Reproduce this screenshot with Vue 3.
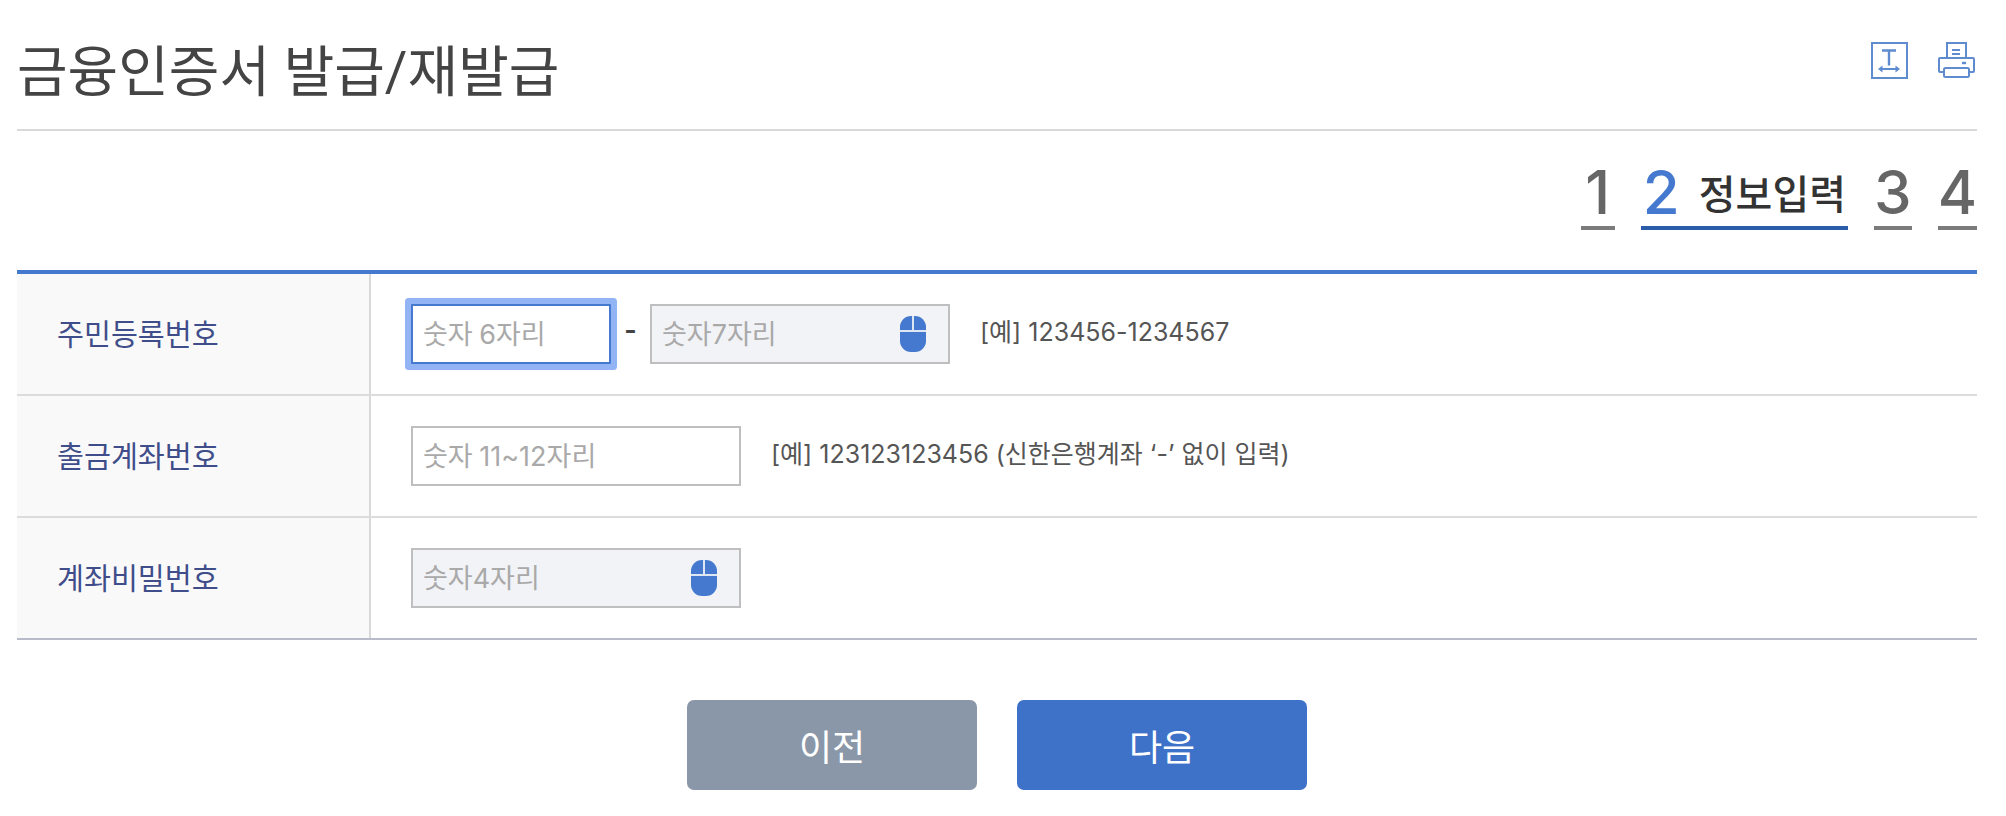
<script setup>
const steps = [
  { num: "1" },
  { num: "2", label: "정보입력", active: true },
  { num: "3" },
  { num: "4" }
];
</script>

<template>
  <div class="page">
    <header class="head">
      <h1>금융인증서 발급/재발급</h1>
      <div class="tools">
        <svg width="37" height="37" viewBox="0 0 37 37" fill="none" stroke="#5f8bcf" stroke-width="2">
          <rect x="1" y="1" width="35" height="35" />
          <path d="M11 8.5h14M18 8.5v15" stroke-width="2.4" />
          <path d="M9 27h18" />
          <path d="M7 27l4.500-3.500v7zM29 27l-4.500-3.500v7z" fill="#5f8bcf" stroke="none" />
        </svg>
        <svg width="37" height="37" viewBox="0 0 37 37" fill="none" stroke="#5f8bcf" stroke-width="2">
          <path d="M9 16V1h19v15" />
          <path d="M14 8h8M14 12h8" />
          <path d="M6 30H2a1 1 0 0 1-1-1V17a1 1 0 0 1 1-1h33a1 1 0 0 1 1 1v12a1 1 0 0 1-1 1h-4" />
          <rect x="6" y="26" width="25" height="9" rx="1.500" />
          <path d="M24 21h4" stroke-width="2.400" />
        </svg>
      </div>
    </header>

    <ol class="steps">
      <li v-for="step in steps" :key="step.num" class="step" :class="{ active: step.active }">
        <span class="num">{{ step.num }}</span>
        <strong v-if="step.label">{{ step.label }}</strong>
      </li>
    </ol>

    <section class="form">
      <div class="row">
        <div class="label">주민등록번호</div>
        <div class="cell">
          <input class="field focus" type="text" placeholder="숫자 6자리" />
          <span class="dash">-</span>
          <div class="secure wide">
            <input class="field" type="text" placeholder="숫자7자리" />
            <svg class="mouse" width="26" height="36" viewBox="0 0 26 36">
              <rect width="26" height="36" rx="11" fill="#4479cf" />
              <path d="M0 15h26M13 0v15" stroke="#dfe6f3" stroke-width="2" />
            </svg>
          </div>
          <span class="hint">[예] 123456-1234567</span>
        </div>
      </div>
      <div class="row">
        <div class="label">출금계좌번호</div>
        <div class="cell">
          <input class="field plain" type="text" placeholder="숫자 11~12자리" />
          <span class="hint">[예] 123123123456 (신한은행계좌 ‘-’ 없이 입력)</span>
        </div>
      </div>
      <div class="row">
        <div class="label">계좌비밀번호</div>
        <div class="cell">
          <div class="secure">
            <input class="field" type="text" placeholder="숫자4자리" />
            <svg class="mouse" width="26" height="36" viewBox="0 0 26 36">
              <rect width="26" height="36" rx="11" fill="#4479cf" />
              <path d="M0 15h26M13 0v15" stroke="#dfe6f3" stroke-width="2" />
            </svg>
          </div>
        </div>
      </div>
    </section>

    <div class="actions">
      <button type="button" class="btn prev">이전</button>
      <button type="button" class="btn next">다음</button>
    </div>
  </div>
</template>

<style>
html,
body {
  background: #fff;
}
</style>

<style scoped>
.page {
  width: 1960px;
  padding-left: 17px;
  font-family: Roboto, "Noto Sans CJK KR", sans-serif;
  color: #555;
}

.head {
  display: flex;
  align-items: flex-start;
  justify-content: space-between;
  height: 129px;
  border-bottom: 2px solid #d9d9d9;
}

.head h1 {
  margin: 36px 0 0;
  font-size: 55px;
  line-height: 72px;
  font-weight: 400;
  color: #444;
}

.tools {
  display: flex;
  gap: 30px;
  padding: 42px 2px 0 0;
}

.steps {
  display: flex;
  justify-content: flex-end;
  gap: 26px;
  height: 139px;
  margin: 0;
  padding: 0;
  list-style: none;
}

.step {
  display: flex;
  align-items: center;
  justify-content: center;
  gap: 19px;
  min-width: 34px;
  height: 68px;
  margin-top: 27px;
  border-bottom: 4px solid #7b7b7b;
}

.step .num {
  font-family: Inter, sans-serif;
  font-size: 60px;
  line-height: 68px;
  font-weight: 500;
  color: #666;
}

.step strong {
  font-size: 40px;
  font-weight: 500;
  color: #333;
  padding-right: 2px;
}

.step.active {
  border-color: #2a5caa;
  padding-left: 2px;
}

.step.active .num {
  color: #4479cf;
}

.form {
  border-top: 4px solid #4479cf;
  border-bottom: 2px solid #b9bbcb;
}

.row {
  display: flex;
  height: 120px;
}

.row + .row {
  border-top: 2px solid #dcdcdc;
}

.label {
  display: flex;
  align-items: center;
  width: 312px;
  padding: 0 0 4px 40px;
  background: #f9f9f9;
  border-right: 2px solid #d9d9d9;
  font-size: 29.3px;
  color: #3f4e8a;
}

.cell {
  display: flex;
  flex: 1;
  align-items: center;
  padding-left: 40px;
}

.field {
  box-sizing: border-box;
  height: 60px;
  padding: 0 10px;
  border: 2px solid #bfbfbf;
  border-radius: 0;
  background: transparent;
  font: inherit;
  font-family: Inter, "Noto Sans CJK KR", sans-serif;
  font-size: 27px;
  word-spacing: -1px;
  color: #333;
  outline: none;
}

.field::placeholder {
  color: #a9a9a9;
  opacity: 1;
}

.field.plain {
  width: 330px;
}

.field.focus {
  width: 200px;
  border-color: #4479cf;
  background: #fff;
  box-shadow: 0 0 0 6px #92b4f5;
  border-radius: 1px;
}

.secure {
  position: relative;
  width: 330px;
  height: 60px;
  background: #f2f3f7;
}

.secure.wide {
  width: 300px;
}

.secure .field {
  width: 100%;
}

.mouse {
  position: absolute;
  top: 12px;
  right: 24px;
}

.dash {
  width: 39px;
  padding-bottom: 8px;
  text-align: center;
  font-size: 34px;
  font-weight: 500;
  color: #444;
}

.hint {
  margin-left: 30px;
  padding-bottom: 8px;
  font-family: Inter, "Noto Sans CJK KR", sans-serif;
  font-size: 25px;
  color: #555;
}

.actions {
  display: flex;
  justify-content: center;
  gap: 40px;
  padding-top: 60px;
}

.btn {
  width: 290px;
  height: 90px;
  border: 0;
  border-radius: 7px;
  font: inherit;
  font-size: 36px;
  color: #fff;
}

.btn.prev {
  background: #8a97a8;
}

.btn.next {
  background: #3e71c8;
}
</style>
